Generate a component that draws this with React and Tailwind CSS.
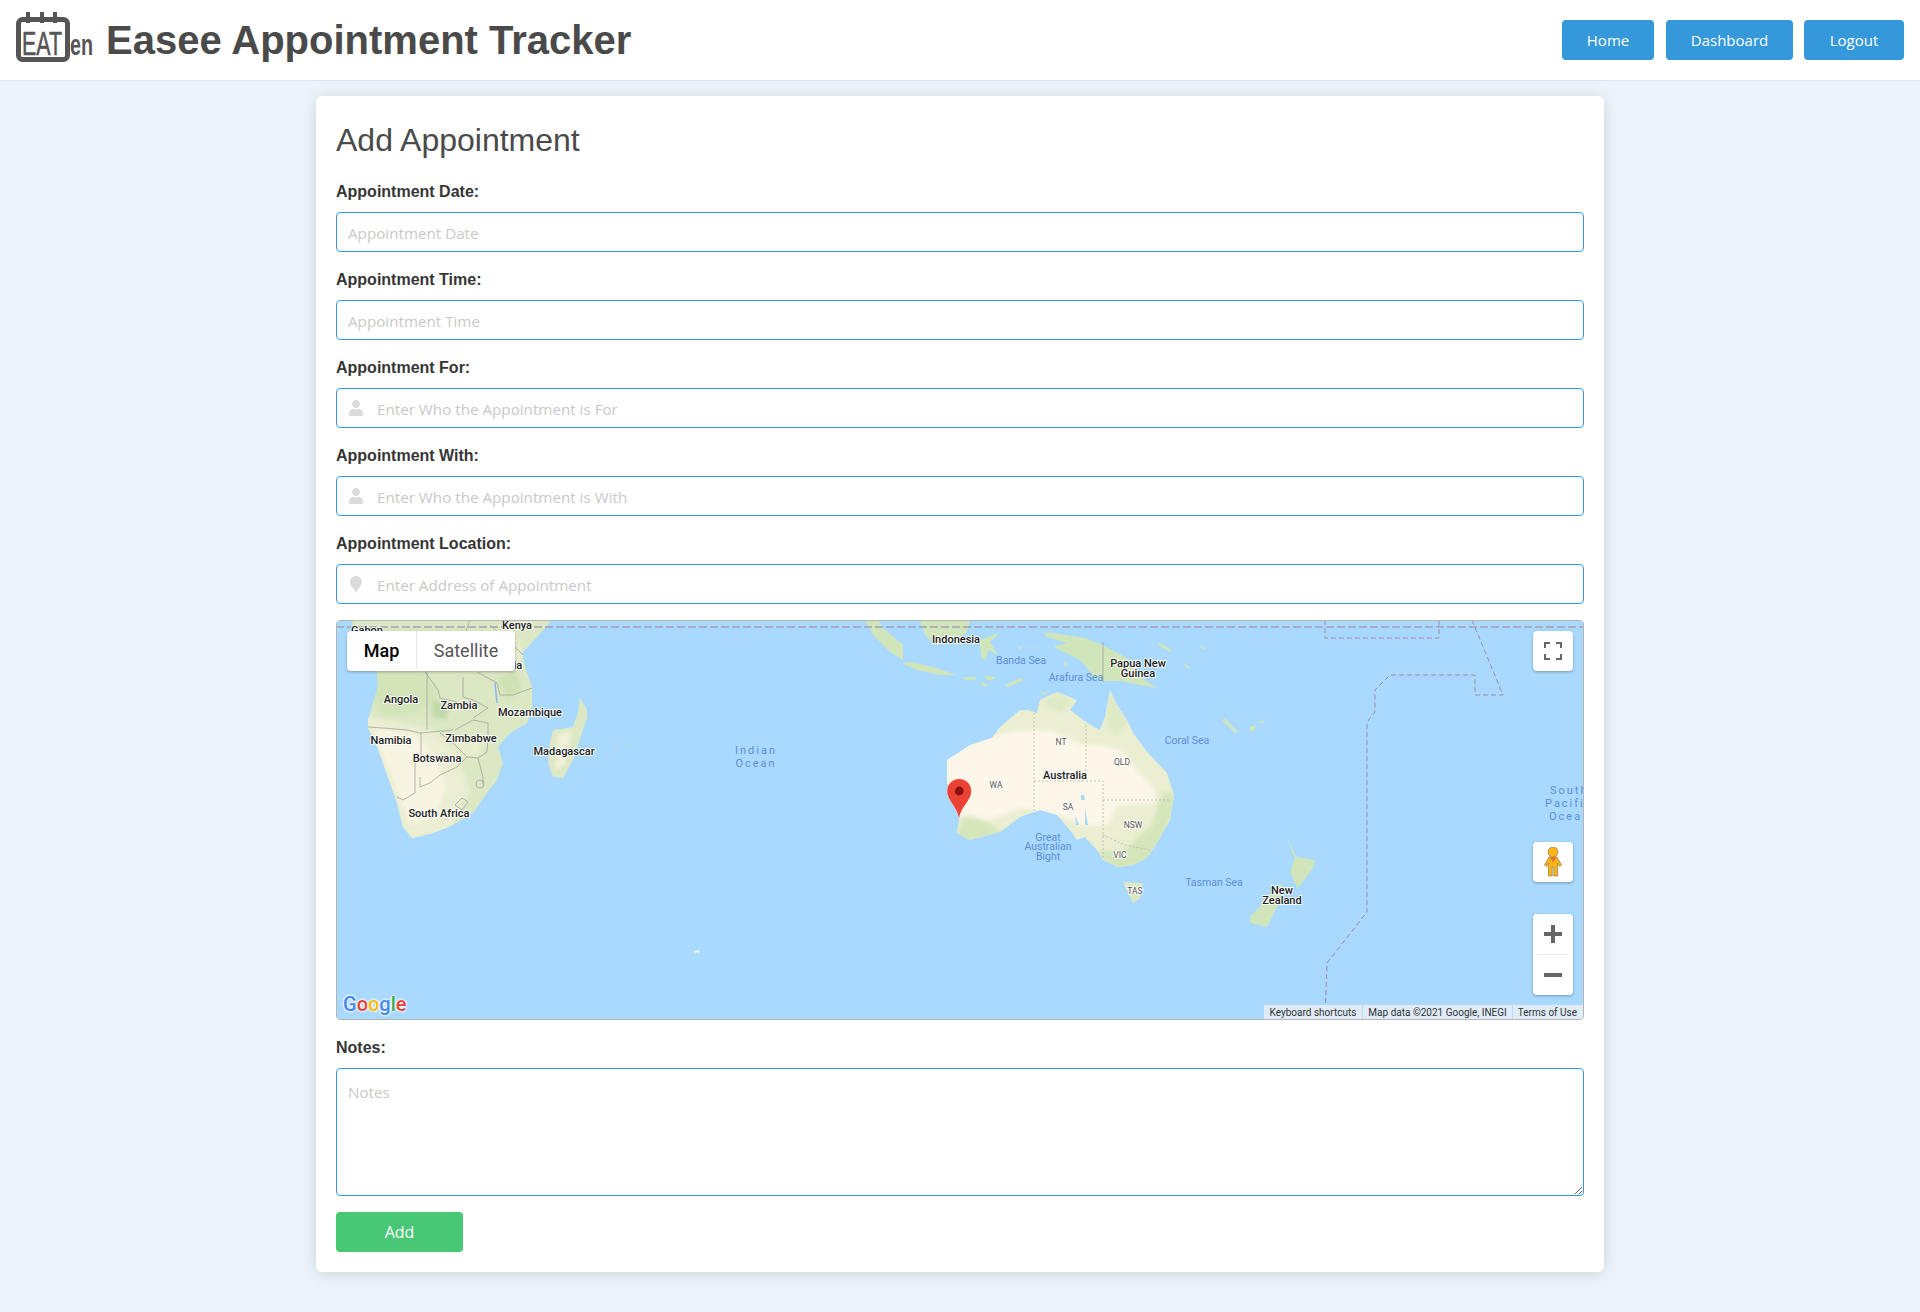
import { FaUser, FaMapMarker } from 'react-icons/fa'

const ROBOTO = 'Roboto, sans-serif'

const AFRICA = 'M352 620L356 650L377 672L378 687L373 703L368 720L368 728L377 747L383 763L390 783L397 803L403 827L412 838L433 833L453 825L473 813L487 793L497 780L503 763L498 747L510 733L527 723L532 707L532 687L525 667L522 653L537 637L552 620Z'
const MADAGASCAR = 'M580 698L587 710L587 718L582 733L573 760L563 778L553 777L548 763L550 743L553 730L573 727L578 712Z'
const AUSTRALIA = 'M947 760L970 745L992 738L1000 727L1020 710L1028 710L1037 713L1040 700L1057 692L1077 700L1070 710L1087 723L1100 730L1105 717L1110 690L1117 705L1127 720L1133 733L1148 753L1167 773L1174 795L1170 820L1157 843L1147 858L1133 865L1118 867L1103 860L1097 850L1085 837L1077 840L1070 830L1057 815L1040 810L1020 817L1000 832L970 840L957 833L959 820L955 803L947 783Z'

const blackLabels = [
  ['Gabon', 367, 634], ['Kenya', 517, 629], ['Tanzania', 500, 669], ['Angola', 401, 703], ['Zambia', 459, 709],
  ['Mozambique', 530, 716], ['Namibia', 391, 744], ['Zimbabwe', 471, 742], ['Botswana', 437, 762],
  ['South Africa', 439, 817], ['Madagascar', 564, 755], ['Indonesia', 956, 643], ['Papua New', 1138, 667],
  ['Guinea', 1138, 677], ['Australia', 1065, 779], ['New', 1282, 894], ['Zealand', 1282, 904],
]
const stateLabels = [
  ['NT', 1061, 745], ['QLD', 1122, 765], ['WA', 996, 788], ['SA', 1068, 810], ['NSW', 1133, 828], ['VIC', 1120, 858], ['TAS', 1135, 894],
]
const seaLabels = [
  ['Banda Sea', 1021, 664], ['Arafura Sea', 1076, 681], ['Coral Sea', 1187, 744], ['Great', 1048, 841],
  ['Australian', 1048, 850], ['Bight', 1048, 860], ['Tasman Sea', 1214, 886],
]
const oceanLabels = [
  ['Indian', 756, 754, 'middle'], ['Ocean', 756, 767, 'middle'], ['South', 1550, 794, 'start'], ['Pacific', 1545, 807, 'start'], ['Ocean', 1549, 820, 'start'],
]

function MapDrawing() {
  return (
    <svg viewBox="336 620 1248 400" className="absolute -inset-px h-[400px] w-[1248px]" fontFamily={ROBOTO}>
      <defs>
        <filter id="soft" x="-10%" y="-10%" width="120%" height="120%"><feGaussianBlur stdDeviation="2" /></filter>
        <clipPath id="africa"><path d={AFRICA} /></clipPath>
        <clipPath id="madagascar"><path d={MADAGASCAR} /></clipPath>
        <clipPath id="australia"><path d={AUSTRALIA} /></clipPath>
      </defs>
      <rect x="336" y="620" width="1248" height="400" fill="#a9d9fe" />

      {/* africa */}
      <path d={AFRICA} fill="#dbe8c3" />
      <g clipPath="url(#africa)">
        <g filter="url(#soft)">
          <path d="M360 715L430 728L455 750L470 790L450 830L405 845L385 790L365 745Z" fill="#ebeed2" />
          <path d="M375 728L418 736L436 756L446 787L436 815L410 825L394 782L380 748Z" fill="#f8f4e2" />
          <path d="M375 672L425 672L440 695L420 712L385 716L372 700Z" fill="#d2e4b8" />
          <path d="M432 700L450 705L445 720L432 716Z" fill="#bfdaa9" />
          <path d="M465 632L515 628L525 655L505 668L472 665Z" fill="#e8edcc" />
          <path d="M452 742L485 735L480 755L462 758Z" fill="#e8edcc" />
          <path d="M498 680L508 700L522 690L515 668Z" fill="#cfe2b4" />
        </g>
      </g>
      <g fill="none" stroke="#a3a39d" strokeWidth="0.8">
        <path d="M368 727L383 728L407 730L420 733L453 730" />
        <path d="M421 733L421 760L415 760L415 793L403 800L397 797" />
        <path d="M420 777L420 787L430 783L440 775L457 767L467 757L453 743L440 733" />
        <path d="M455 730L473 720L488 723L488 737L487 752L478 758L467 757" />
        <path d="M478 758L483 777L483 785" />
        <circle cx="480" cy="784" r="4" />
        <path d="M455 805L462 798L468 802L462 810Z" />
        <path d="M427 672L427 730M425 672L438 690L440 698L457 702" />
        <path d="M463 677L463 697L473 700L488 708L473 718" />
        <path d="M477 672L497 683L500 695L513 695L532 688M515 647L523 655" />
        <path d="M352 640L400 632M470 620L463 640M515 647L490 625" />
      </g>
      <path d="M495 683L497 703" fill="none" stroke="#8ab9ef" strokeWidth="1.5" />
      <path d={MADAGASCAR} fill="#dbe8c3" />
      <g clipPath="url(#madagascar)">
        <path d="M558 735L572 730L565 765L555 770Z" fill="#f4f1da" filter="url(#soft)" />
      </g>
      <circle cx="616" cy="751" r="0.9" fill="#c8e0b0" />
      <circle cx="628" cy="746" r="0.9" fill="#c8e0b0" />

      {/* australia */}
      <path d={AUSTRALIA} fill="#ebeed1" />
      <g clipPath="url(#australia)">
        <g filter="url(#soft)">
          <path d="M945 757L983 738L1017 730L1050 730L1083 745L1100 745L1120 750L1140 773L1155 790L1155 803L1118 805L1108 825L1085 826L1060 815L1020 808L985 822L968 818L958 815L945 795Z" fill="#fcf7e9" />
          <path d="M955 836L970 845L1003 834L990 822L965 815Z" fill="#d6e6bb" />
          <path d="M1095 852L1118 870L1150 860L1160 845L1172 815L1178 795L1163 792L1152 825L1125 850Z" fill="#d3e5b9" />
          <path d="M1108 692L1117 705L1128 722L1115 735L1106 722Z" fill="#dee9c5" />
          <path d="M1042 702L1057 694L1074 701L1060 712Z" fill="#dee9c5" />
        </g>
      </g>
      <g fill="none" stroke="#b5b5ac" strokeWidth="0.8" strokeDasharray="2 2">
        <path d="M1034 713L1034 815" />
        <path d="M1086 725L1086 781" />
        <path d="M1034 781L1103 781L1103 860" />
        <path d="M1103 800L1170 800" />
        <path d="M1103 835L1125 845L1150 850" />
      </g>
      <path d="M1081 795L1084 795L1085 800L1081 800Z M1075 815L1079 825L1076 825Z M1085 808L1088 825L1085 825Z" fill="#a9d9fe" />
      <path d="M1123 882L1143 883L1140 898L1133 903L1128 893Z" fill="#dbe8c3" />
      <path d="M1287 839L1297 857L1315 860L1313 868L1302 883L1297 888L1290 872L1295 858Z" fill="#d0e5b9" />
      <path d="M1283 883L1277 907L1267 927L1250 923L1250 917L1263 903L1272 893Z" fill="#d0e5b9" />

      {/* indonesia and papua */}
      <g fill="#d0e5b9">
        <path d="M865 620L873 635L890 652L903 660L903 645L883 628L878 620Z" />
        <path d="M902 663L912 662L933 667L957 675L940 675L917 670Z" />
        <path d="M963 677L977 677L975 680L965 680ZM983 676L997 677L990 681ZM982 682L988 685L986 687L980 684Z" />
        <path d="M1005 685L1020 678L1024 680L1008 687Z" />
        <path d="M920 620L970 620L967 632L955 640L935 645L925 635Z" />
        <path d="M980 640L1000 632L990 642L998 655L988 650L986 660L981 658Z" />
        <path d="M1043 632L1060 634L1085 638L1103 645L1130 660L1142 678L1157 688L1135 684L1120 681L1103 681L1093 676L1087 668L1080 660L1060 650L1053 646L1067 643L1047 637Z" />
        <path d="M1020 645L1033 647L1045 650L1030 647ZM1018 646L1022 648L1020 650Z" />
        <path d="M1160 643L1172 650L1170 652L1158 645ZM1182 660L1190 668L1188 669Z" />
        <path d="M1040 693L1048 692L1045 695ZM1065 660L1068 665L1064 667Z" />
        <path d="M1200 645L1205 648L1203 650Z M1225 718L1238 732L1235 733L1222 720Z M1250 727L1256 725L1254 731L1250 731Z M1258 722L1265 720L1262 723Z" />
      </g>
      <path d="M1103 642L1103 682" stroke="#a3a39d" strokeWidth="0.8" fill="none" />
      <path d="M697 950l3 1l-1 2l-3 -1l-1 2l-1 -3Z" fill="#eef4ec" />

      {/* disputed and ocean boundaries */}
      <g fill="none" stroke="#a18a9f" strokeWidth="1" strokeDasharray="5 3">
        <path d="M1325 620L1325 638L1439 638L1439 620" />
        <path d="M1472 620L1503 695L1475 695L1475 675L1390 675L1375 690L1375 712L1367 722L1367 912L1327 963L1325 1020" />
      </g>
      <path d="M336 627L1584 627" stroke="#a69fb5" strokeWidth="1.5" strokeDasharray="8 3" />

      {blackLabels.map(([t, x, y]) => (
        <text key={t + x} x={x} y={y} textAnchor="middle" fontSize="11" fontWeight="500" fill="#222" stroke="#fff" strokeOpacity="0.85" strokeWidth="2" paintOrder="stroke">{t}</text>
      ))}
      {stateLabels.map(([t, x, y]) => (
        <text key={t} x={x} y={y} textAnchor="middle" fontSize="8.5" fill="#555" stroke="#fff" strokeOpacity="0.8" strokeWidth="2" paintOrder="stroke">{t}</text>
      ))}
      {seaLabels.map(([t, x, y]) => (
        <text key={t} x={x} y={y} textAnchor="middle" fontSize="10.5" fill="#5b8ed6">{t}</text>
      ))}
      {oceanLabels.map(([t, x, y, a]) => (
        <text key={t + x} x={x} y={y} textAnchor={a} fontSize="11" letterSpacing="2" fill="#5b8ed6">{t}</text>
      ))}

      <path d="M959 819C957 806 947 801 947 791A12.2 12.2 0 1 1 971.4 791C971.4 801 961 806 959 819Z" fill="#ea4335" stroke="#fff" strokeOpacity="0.5" strokeWidth="0.6" />
      <circle cx="959.2" cy="791" r="4.4" fill="#8a1010" />
    </svg>
  )
}

function MapControls() {
  return (
    <>
      <div className="absolute left-[10px] top-[10px] flex h-10 w-[168px] rounded-sm bg-white pb-0.5 text-[18px] font-['Roboto',sans-serif] shadow-[0_1px_3px_rgba(0,0,0,0.3)]">
        <div className="flex w-[70px] items-center justify-center border-r border-[#e6e6e6] font-medium text-black">Map</div>
        <div className="flex flex-1 items-center justify-center text-[#565656]">Satellite</div>
      </div>

      <div className="absolute right-[10px] top-[10px] flex h-10 w-10 items-center justify-center rounded-sm bg-white shadow-[0_1px_3px_rgba(0,0,0,0.3)]">
        <svg width="18" height="18" viewBox="0 0 18 18" fill="none" stroke="#666" strokeWidth="2">
          <path d="M1 6V1H6M12 1H17V6M17 12V17H12M6 17H1V12" />
        </svg>
      </div>

      <div className="absolute right-[10px] top-[221px] flex h-10 w-10 items-center justify-center rounded-sm bg-white shadow-[0_1px_3px_rgba(0,0,0,0.3)]">
        <svg width="18" height="30" viewBox="0 0 18 30" stroke="#8a7a55" strokeWidth="0.7">
          <path d="M5 10H13L17.5 18L15.5 19.5L13.5 16V29H9.8V20H8.2V29H4.5V16L2.5 19.5L0.5 18Z" fill="#fdb515" />
          <circle cx="9" cy="5" r="5" fill="#fdb515" />
          <path d="M5.5 10H12.5L9 15.5Z" fill="#e8742a" stroke="none" />
        </svg>
      </div>

      <div className="absolute right-[10px] top-[293px] flex h-[81px] w-10 flex-col items-center rounded-sm bg-white shadow-[0_1px_3px_rgba(0,0,0,0.3)]">
        <div className="flex h-10 items-center justify-center">
          <svg width="18" height="18" viewBox="0 0 18 18" fill="#666"><path d="M7 0H11V7H18V11H11V18H7V11H0V7H7Z" /></svg>
        </div>
        <div className="h-px w-[30px] bg-[#e6e6e6]" />
        <div className="flex h-10 items-center justify-center">
          <svg width="18" height="18" viewBox="0 0 18 18" fill="#666"><path d="M0 7H18V11H0Z" /></svg>
        </div>
      </div>

      <div className="absolute bottom-[3px] left-[6px] text-[20px] leading-6 font-medium font-['Roboto',sans-serif] [text-shadow:0_0_2px_#fff,0_0_3px_#fff,0_0_3px_#fff]">
        <span className="text-[#4285f4]">G</span>
        <span className="text-[#ea4335]">o</span>
        <span className="text-[#fbbc05]">o</span>
        <span className="text-[#4285f4]">g</span>
        <span className="text-[#34a853]">l</span>
        <span className="text-[#ea4335]">e</span>
      </div>

      <div className="absolute bottom-0 right-0 flex h-[14px] items-center divide-x divide-[#b9dcf9] bg-[#dfecf8] pr-px text-[10px] text-[#333] font-['Roboto',sans-serif]">
        <span className="pl-[6px] pr-[6px]">Keyboard shortcuts</span>
        <span className="px-[5px]">Map data ©2021 Google, INEGI</span>
        <span className="px-[5px]">Terms of Use</span>
      </div>
    </>
  )
}

function Logo() {
  return (
    <svg width="78" height="50" viewBox="0 0 78 50" className="-mt-[6px] shrink-0">
      <g fill="#555">
        <rect x="10" y="0" width="4" height="11" />
        <rect x="24" y="0" width="4" height="11" />
        <rect x="37" y="0" width="4" height="11" />
      </g>
      <rect x="2.5" y="7.5" width="49" height="40" rx="4" fill="none" stroke="#555" strokeWidth="5" />
      <text x="6" y="43" fontSize="34" fontFamily="'Liberation Sans', sans-serif" fill="#555" stroke="#555" strokeWidth="0.6" textLength="40" lengthAdjust="spacingAndGlyphs">EAT</text>
      <text x="54" y="43" fontSize="30" fontWeight="700" fontFamily="'Liberation Sans', sans-serif" fill="#555" textLength="23" lengthAdjust="spacingAndGlyphs">en</text>
    </svg>
  )
}

function Field({ label, placeholder, icon }) {
  return (
    <div className="mb-4">
      <label className="mb-2 block text-base font-bold leading-6 text-[#363636]">{label}</label>
      <div className="relative">
        {icon && <span className="absolute left-[12px] top-[12px] text-[#dbdbdb]">{icon}</span>}
        <input
          placeholder={placeholder}
          className={`h-10 w-full rounded border border-[#3498db] bg-white pr-3 pt-[2px] text-[15.2px] font-['Open_Sans',sans-serif] outline-none placeholder:text-[#c9c9c9] ${icon ? 'pl-10' : 'pl-[11px]'}`}
        />
      </div>
    </div>
  )
}

export default function App() {
  return (
    <div className="min-h-[1312px] bg-[#ebf3fb] font-['Liberation_Sans',sans-serif]">
      <header className="flex h-[81px] items-center justify-between border-b border-[#dbe3ec] bg-white pl-4 pr-4">
        <div className="flex items-center gap-3">
          <Logo />
          <h1 className="text-[40px] font-bold leading-none text-[#4a4a4a]">Easee Appointment Tracker</h1>
        </div>
        <nav className="flex gap-[11px] text-[15px] text-white font-['Open_Sans',sans-serif]">
          <button className="mr-px h-10 w-[92px] rounded bg-[#3498db]">Home</button>
          <button className="h-10 w-[127px] rounded bg-[#3498db]">Dashboard</button>
          <button className="h-10 w-[100px] rounded bg-[#3498db]">Logout</button>
        </nav>
      </header>

      <main className="mx-auto mt-[15px] w-[1288px] rounded-md bg-white p-5 shadow-[0_2px_16px_rgba(0,0,0,0.13)]">
        <h2 className="mb-4 text-[32px] leading-[48px] text-[#4a4a4a]">Add Appointment</h2>
        <Field label="Appointment Date:" placeholder="Appointment Date" />
        <Field label="Appointment Time:" placeholder="Appointment Time" />
        <Field label="Appointment For:" placeholder="Enter Who the Appointment is For" icon={<FaUser size={16} />} />
        <Field label="Appointment With:" placeholder="Enter Who the Appointment is With" icon={<FaUser size={16} />} />
        <Field label="Appointment Location:" placeholder="Enter Address of Appointment" icon={<FaMapMarker size={16} />} />

        <div className="relative mb-4 h-[400px] overflow-hidden rounded border border-[#b5b5b5]">
          <MapDrawing />
          <MapControls />
        </div>

        <div className="mb-4">
          <label className="mb-2 block text-base font-bold leading-6 text-[#363636]">Notes:</label>
          <textarea
            placeholder="Notes"
            className="block h-32 w-full rounded border border-[#3498db] bg-white px-[11px] py-3 text-[15.2px] font-['Open_Sans',sans-serif] outline-none placeholder:text-[#c9c9c9]"
          />
        </div>

        <button className="h-10 w-[127px] rounded bg-[#48c774] text-base text-white font-['Open_Sans',sans-serif]">Add</button>
      </main>
    </div>
  )
}
